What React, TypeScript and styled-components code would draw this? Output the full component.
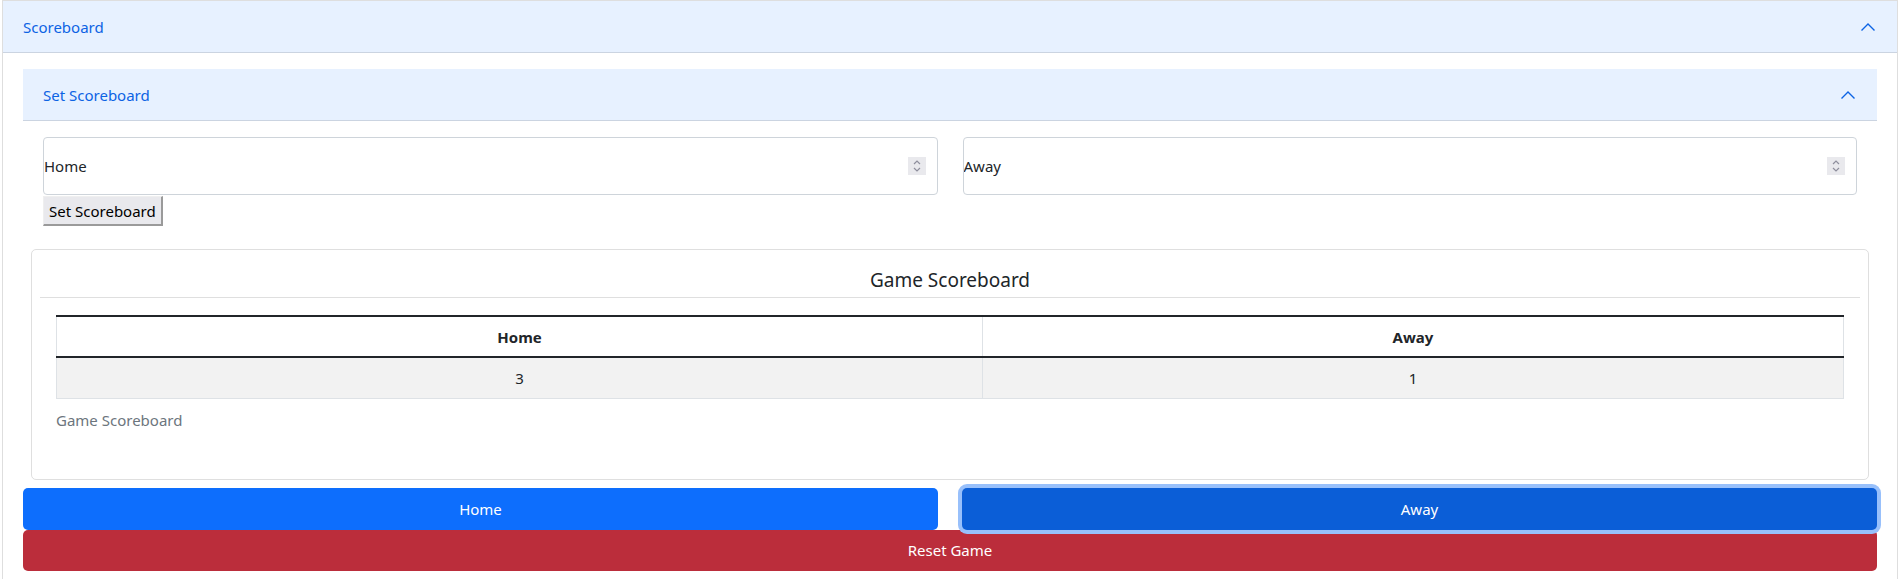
import React from "react";
import styled, { createGlobalStyle } from "styled-components";

const GlobalStyle = createGlobalStyle`
  html, body { margin: 0; padding: 0; background: #fff; }
  body { font-family: "Noto Sans", "Open Sans", sans-serif; color: #212529; }
  * { box-sizing: border-box; }
`;

const Outer = styled.section`
  margin: 0 1px 0 2px;
  border: 1px solid #dedede;
  border-bottom: none;
  min-height: 579px;
`;

const AccHeader = styled.div`
  display: flex;
  align-items: center;
  justify-content: space-between;
  height: 52px;
  padding: 0 21px 0 20px;
  background: #e7f1ff;
  border-bottom: 1px solid #cbd4e1;
  color: #0c63e4;
  font-size: 15px;
`;

const OuterBody = styled.div`
  padding: 16px 20px 6px;
`;

const Inner = styled.section``;

const InnerBody = styled.div`
  padding: 16px 20px 15px;
`;

const InputRow = styled.div`
  display: grid;
  grid-template-columns: 1fr 1fr;
  gap: 25px;
`;

const NumberBox = styled.label`
  display: flex;
  align-items: center;
  height: 58px;
  border: 1px solid #ced4da;
  border-radius: 4px;
  padding: 0 11px 0 0;
  background: #fff;
`;

const NumberInput = styled.input`
  flex: 1;
  border: none;
  outline: none;
  background: transparent;
  font-family: "Noto Sans", sans-serif;
  font-size: 15px;
  padding: 0;
  color: #212529;
  &::placeholder { color: #212529; opacity: 1; }
`;

const Spinner = styled.span`
  display: flex;
  align-items: center;
  justify-content: center;
  width: 18px;
  height: 18px;
  background: #e9e9ed;
`;

const PlainButton = styled.button`
  display: block;
  margin-top: 1px;
  height: 30px;
  padding: 0 5px;
  background: #e9e9ed;
  border-style: solid;
  border-width: 1px 2px 2px 1px;
  border-color: #efefef #9a9a9a #9a9a9a #efefef;
  font-family: "Noto Sans", sans-serif;
  font-size: 15px;
  color: #000;
`;

const Card = styled.div`
  margin: 8px 8px 8px;
  border: 1px solid #dfdfdf;
  border-radius: 5px;
  padding: 8px 8px 0;
`;

const CardHeader = styled.div`
  padding: 8px 0 3px;
  border-bottom: 1px solid #dfdfdf;
  text-align: center;
  font-size: 19px;
  line-height: 28px;
  color: #212529;
`;

const CardBody = styled.div`
  padding: 17px 16px 48px;
`;

const Table = styled.table`
  width: 100%;
  border-collapse: collapse;
  table-layout: fixed;
  font-size: 15px;
  caption-side: bottom;
`;

const Caption = styled.caption`
  text-align: left;
  color: #6c757d;
  padding-top: 10px;
  line-height: 22px;
`;

const HeadCell = styled.th`
  height: 41px;
  border-top: 2px solid #212529;
  border-bottom: 2px solid #212529;
  border-left: 1px solid #dee2e6;
  border-right: 1px solid #dee2e6;
  background: #fff;
  font-weight: 700;
  text-align: center;
`;

const BodyCell = styled.td`
  height: 41px;
  border: 1px solid #dee2e6;
  border-top: none;
  background: #f2f2f2;
  text-align: center;
`;

const ButtonRow = styled.div`
  display: grid;
  grid-template-columns: 1fr 1fr;
  column-gap: 24px;
`;

const ScoreButton = styled.button<{ $active?: boolean }>`
  height: 42px;
  border: none;
  border-radius: 5px;
  background: ${(p) => (p.$active ? "#0b5ed7" : "#0d6efd")};
  box-shadow: ${(p) => (p.$active ? "0 0 0 4px #98c0fb" : "none")};
  color: #fff;
  font-family: "Noto Sans", sans-serif;
  font-size: 15px;
`;

const ResetButton = styled.button`
  display: block;
  width: 100%;
  height: 41px;
  border: none;
  border-radius: 5px;
  background: #bb2d3b;
  color: #fff;
  font-family: "Noto Sans", sans-serif;
  font-size: 15px;
`;

const Chevron = () => (
  <svg width="16" height="16" viewBox="0 0 16 16" fill="none">
    <path d="M1.5 11.5 L8 5 L14.5 11.5" stroke="#0c63e4" strokeWidth="1.4" />
  </svg>
);

const SpinIcon = () => (
  <svg width="10" height="14" viewBox="0 0 10 14" fill="none">
    <path d="M2 5 L5 2 L8 5" stroke="#8f8f9d" strokeWidth="1.2" />
    <path d="M2 9 L5 12 L8 9" stroke="#8f8f9d" strokeWidth="1.2" />
  </svg>
);

export default function App() {
  return (
    <>
      <GlobalStyle />
      <Outer>
        <AccHeader>
          <span>Scoreboard</span>
          <Chevron />
        </AccHeader>
        <OuterBody>
          <Inner>
            <AccHeader>
              <span>Set Scoreboard</span>
              <Chevron />
            </AccHeader>
            <InnerBody>
              <InputRow>
                <NumberBox>
                  <NumberInput placeholder="Home" />
                  <Spinner><SpinIcon /></Spinner>
                </NumberBox>
                <NumberBox>
                  <NumberInput placeholder="Away" />
                  <Spinner><SpinIcon /></Spinner>
                </NumberBox>
              </InputRow>
              <PlainButton>Set Scoreboard</PlainButton>
            </InnerBody>
          </Inner>
          <Card>
            <CardHeader>Game Scoreboard</CardHeader>
            <CardBody>
              <Table>
                <colgroup>
                  <col style={{ width: "926px" }} />
                  <col />
                </colgroup>
                <thead>
                  <tr>
                    <HeadCell>Home</HeadCell>
                    <HeadCell>Away</HeadCell>
                  </tr>
                </thead>
                <tbody>
                  <tr>
                    <BodyCell>3</BodyCell>
                    <BodyCell>1</BodyCell>
                  </tr>
                </tbody>
                <Caption>Game Scoreboard</Caption>
              </Table>
            </CardBody>
          </Card>
          <ButtonRow>
            <ScoreButton>Home</ScoreButton>
            <ScoreButton $active>Away</ScoreButton>
          </ButtonRow>
          <ResetButton>Reset Game</ResetButton>
        </OuterBody>
      </Outer>
    </>
  );
}
